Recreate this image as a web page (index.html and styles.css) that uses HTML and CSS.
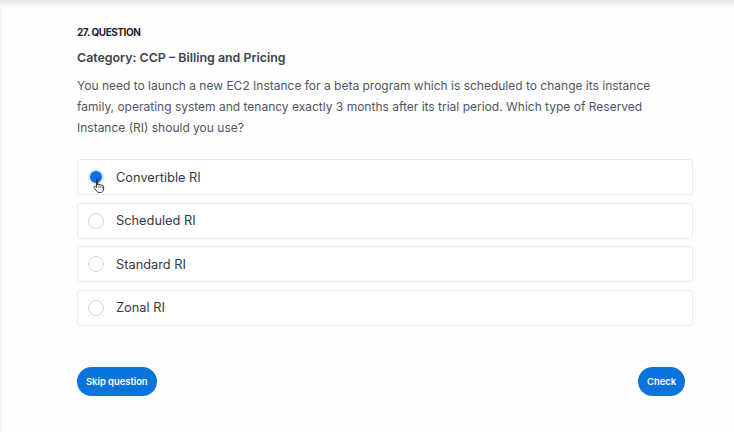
FILE: index.html
```html
<!DOCTYPE html>
<html lang="en">
<head>
<meta charset="utf-8">
<title>Question 27</title>
<link rel="stylesheet" href="styles.css">
</head>
<body>
<div class="topband"></div>
<main class="card">
  <div class="quiz">
    <div class="qnum">27. QUESTION</div>
    <h2 class="category">Category: CCP – Billing and Pricing</h2>
    <p class="stem">You need to launch a new EC2 Instance for a beta program which is scheduled to change its instance family, operating system and tenancy exactly 3 months after its trial period. Which type of Reserved Instance (RI) should you use?</p>
    <ul class="options">
      <li class="option selected">
        <span class="radio"></span>
        <span class="label">Convertible RI</span>
        <svg class="cursor" width="12" height="15" viewBox="0 0 12 15"><path d="M3.5 1.2c.6 0 1 .4 1 1V7l.3-.1c.2-.6.7-.9 1.2-.8.5.1.8.5.8 1l.3-.1c.3-.4.8-.5 1.2-.3.3.2.5.5.5.9.4-.3.9-.3 1.3 0 .3.2.5.6.5 1v2.6c0 1.8-1.3 3.3-3.1 3.3H6.2c-1 0-1.9-.5-2.5-1.3L1.2 9.6c-.3-.4-.2-1 .2-1.3.4-.3 1-.2 1.3.2l.8 1V2.2c0-.6.4-1 1-1z" fill="#fff" stroke="#222" stroke-width="0.9" stroke-linejoin="round"/><path d="M5.9 7.4v2.4M7.8 7.9v2M9.6 8.6v1.5" stroke="#222" stroke-width="0.7" fill="none"/></svg>
      </li>
      <li class="option"><span class="radio"></span><span class="label">Scheduled RI</span></li>
      <li class="option"><span class="radio"></span><span class="label">Standard RI</span></li>
      <li class="option"><span class="radio"></span><span class="label">Zonal RI</span></li>
    </ul>
    <div class="actions">
      <button class="btn">Skip question</button>
      <button class="btn">Check</button>
    </div>
  </div>
</main>
</body>
</html>
```

FILE: styles.css
```css
* { box-sizing: border-box; }
html, body {
  margin: 0;
  padding: 0;
  background: #ffffff;
}
body {
  font-family: Inter, "Noto Sans", "Liberation Sans", sans-serif;
  width: 734px;
  height: 432px;
  overflow: hidden;
}
.topband {
  height: 8px;
  background: linear-gradient(#e4e4e9, #f6f6f8 60%, #ffffff);
}
.card {
  border-left: 2px solid #f3f4f7;
  height: 424px;
  background: #fefeff;
}
.quiz {
  width: 691px;
  padding-left: 75px;
  padding-top: 17px;
}
.qnum {
  font-size: 10px;
  font-weight: 700;
  line-height: 14px;
  color: #1d2330;
  letter-spacing: -0.45px;
}
.category {
  margin: 9px 0 0;
  font-size: 12.4px;
  font-weight: 600;
  line-height: 20px;
  color: #3c4350;
}
.stem {
  margin: 7px 0 0;
  max-width: 600px;
  font-size: 12px;
  font-weight: 400;
  line-height: 21px;
  color: #50565f;
}
.options {
  list-style: none;
  margin: 21px 0 0;
  padding: 0;
  display: flex;
  flex-direction: column;
  gap: 7.5px;
}
.option {
  position: relative;
  height: 36px;
  border: 1px solid #ececef;
  border-radius: 3px;
  display: flex;
  align-items: center;
  padding-left: 10px;
  background: #fff;
}
.radio {
  width: 16px;
  height: 16px;
  border-radius: 50%;
  border: 1px solid #d4d6dc;
  background: #fff;
  flex: none;
}
.option.selected .radio {
  border: 2px solid #dbe6f5;
  background: #0a70df;
}
.label {
  margin-left: 12px;
  font-size: 12.8px;
  color: #343a45;
}
.cursor {
  position: absolute;
  left: 15px;
  top: 18px;
}
.actions {
  margin-top: 41px;
  display: flex;
  justify-content: space-between;
  padding-right: 8px;
}
.btn {
  font-family: inherit;
  height: 29px;
  border: none;
  border-radius: 15px;
  background: #0a74dc;
  color: #fff;
  font-size: 9.4px;
  font-weight: 600;
  padding: 0 9px;
  cursor: pointer;
}
```
